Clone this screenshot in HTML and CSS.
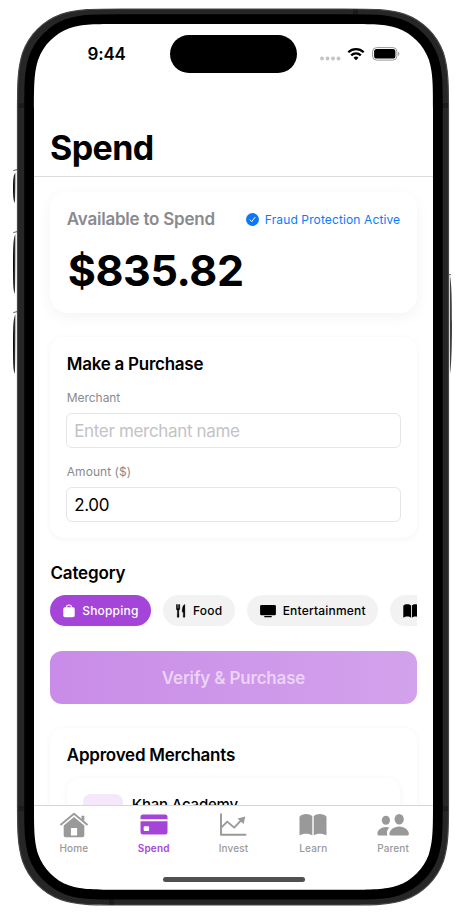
FILE: index.html
```html
<!DOCTYPE html>
<html lang="en">
<head>
<meta charset="utf-8">
<title>Spend</title>
<link rel="stylesheet" href="styles.css">
</head>
<body>
<svg class="device" viewBox="0 0 457 924" aria-hidden="true">
  <defs>
    <linearGradient id="key" x1="0" x2="1"><stop offset="0" stop-color="#000"/><stop offset=".5" stop-color="#222"/><stop offset=".7" stop-color="#888"/><stop offset="1" stop-color="#ccc"/></linearGradient>
    <linearGradient id="power" x1="0" x2="1"><stop offset="0" stop-color="#ccc"/><stop offset=".4" stop-color="#444"/><stop offset="1" stop-color="#000"/></linearGradient>
    <path id="shell" d="M17.5 114.5c0-30.4 0-45.6 5.2-61.9c6.5-17.9 20.5-31.9 38.4-38.4c16.3-5.2 31.5-5.2 61.9-5.2H343c30.4 0 45.6 0 61.9 5.2c17.9 6.5 31.9 20.5 38.4 38.4c5.2 16.3 5.2 31.5 5.2 61.9V799.5c0 30.4 0 45.6-5.2 61.9c-6.5 17.9-20.5 31.9-38.4 38.4c-16.3 5.2-31.5 5.2-61.9 5.2H123c-30.4 0-45.6 0-61.9-5.2c-17.9-6.5-31.9-20.5-38.4-38.4c-5.2-16.3-5.2-31.5-5.2-61.9z"/>
    <path id="glass" d="M34 109.6c0-24.6 0-37 4.2-50.2c5.3-14.5 16.7-25.9 31.2-31.2c13.2-4.2 25.6-4.2 50.2-4.2H347.4c24.6 0 37 0 50.2 4.2c14.5 5.3 25.9 16.7 31.2 31.2c4.2 13.2 4.2 25.6 4.2 50.2V804.2c0 24.6 0 37-4.2 50.2c-5.3 14.5-16.7 25.9-31.2 31.2c-13.2 4.2-25.6 4.2-50.2 4.2H119.6c-24.6 0-37 0-50.2-4.2c-14.5-5.3-25.9-16.7-31.2-31.2c-4.2-13.2-4.2-25.6-4.2-50.2z"/>
  </defs>
  <path d="M13.3 170.500l3.700-.8M13.3 232.500l3.700-.8M13.3 312.500l3.700-.8M449 274.700h2" stroke="#333" stroke-width=".8"/>
  <g fill="url(#key)">
    <path d="M15.800 172.500c-2.400 1-2.800 8-2.800 15s.3 13 1.600 15.500c1-4 1.500-25 1.200-30.500z"/>
    <path d="M15.800 234c-2.400 2-2.800 12-2.800 30s.3 27 1.600 30c1-6 1.500-50 1.200-60z"/>
    <path d="M15.800 314c-2.400 2-2.800 12-2.800 30s.3 27 1.600 30c1-6 1.500-50 1.200-60z"/>
  </g>
  <path d="M449.500 275c1.900 3 2.300 20 2.300 49s-.6 43-1.600 49c-.8-10-.7-84-.7-98z" fill="url(#power)"/>
  <use href="#shell" fill="#262626" stroke="#464646" stroke-width="1.200"/>
  <path d="M18.500 105.500h6M442 105.500h6M18.500 808.500h6M442 808.500h6M111.500 899v5.500M355.500 9.500v6" stroke="#1c1c1c" stroke-width="5"/>
  <use href="#glass" fill="#000" stroke="#000" stroke-width="19.500"/>
  <use href="#glass" fill="#fff"/>
</svg>

<main class="screen">
  <header class="status">
    <span class="time">9:44</span>
    <span class="island"></span>
    <span class="signals">
      <svg width="21" height="5" viewBox="0 0 21 5" fill="#c4c4c4"><circle cx="2" cy="2.500" r="1.900"/><circle cx="7.500" cy="2.500" r="1.900"/><circle cx="13" cy="2.500" r="1.900"/><circle cx="18.500" cy="2.500" r="1.900"/></svg>
      <svg class="wifi" width="18" height="14" viewBox="0 0 18 14" fill="none" stroke="#000" stroke-width="2.300"><path d="M1.300 5.200a11 11 0 0 1 15.400 0M4.200 8.400a6.900 6.900 0 0 1 9.600 0"/><path d="M9 13.200 6.500 10.700a3.600 3.600 0 0 1 5 0z" fill="#000" stroke="none"/></svg>
      <svg class="battery" width="28" height="14" viewBox="0 0 28 14"><rect x=".6" y=".6" width="24.300" height="12.500" rx="4" fill="none" stroke="#999"/><rect x="2.100" y="2.100" width="21.300" height="9.500" rx="2.600"/><path d="M26 4.800c2 .9 2 3.200 0 4.100z" fill="#aaa"/></svg>
    </span>
  </header>
  <h1 class="title"><span>Spend</span></h1>

  <div class="content">
    <section class="card balance">
      <div class="row">
        <h2 class="muted">Available to Spend</h2>
        <span class="fraud"><svg width="13" height="13" viewBox="0 0 12 12"><circle cx="6" cy="6" r="6" fill="#0a78fb"/><path d="M3.700 6.300 5.300 8 8.300 4" fill="none" stroke="#fff" stroke-width=".9" stroke-linecap="round" stroke-linejoin="round"/></svg><span>Fraud Protection Active</span></span>
      </div>
      <div class="amount">$835.82</div>
    </section>

    <section class="card form">
      <h2 class="make">Make a Purchase</h2>
      <div class="label merchant">Merchant</div>
      <div class="field hint"><span>Enter merchant name</span></div>
      <div class="label">Amount ($)</div>
      <div class="field"><span>2.00</span></div>
    </section>

    <h2 class="category">Category</h2>
    <div class="chips">
      <span class="chip on"><svg width="12" height="14" viewBox="0 0 12 14"><path d="M3.500 4.500V3.200a2.500 2.200 0 0 1 5 0v1.300" fill="none" stroke="currentColor" stroke-width="1.200"/><rect x=".3" y="3.200" width="11.400" height="10" rx="1.700" fill="currentColor"/></svg><span>Shopping</span></span>
      <span class="chip"><svg width="10" height="14" viewBox="0 0 10 14" fill="currentColor"><path d="M.3.500h.8v3.800h.5V.500h.9v3.800H3V.500h.8v4.300c0 .9-.5 1.400-1 1.700l.2 6.300c0 1-1.800 1-1.800 0l.2-6.300c-.6-.3-1.100-.8-1.100-1.700zM8.900.500v12.300c0 1-1.700 1-1.700 0l.1-4.200-1.100-.5C6.100 4 7 .8 8.900.500z" stroke="currentColor" stroke-width=".3"/></svg><span>Food</span></span>
      <span class="chip"><svg width="16" height="14" viewBox="0 0 16 14" fill="currentColor"><rect x=".1" y="1" width="15.800" height="10.300" rx="1.300"/><rect x="4.200" y="12.100" width="7.600" height="1.100" rx=".5"/></svg><span>Entertainment</span></span>
      <span class="chip more"><svg width="17" height="14" viewBox="0 0 28 23" fill="currentColor"><path d="M.5 3C3-.2 10.500-.2 13.300 2.500v20C10.500 20 4 20 .5 22.500zM14.700 2.500C17.500-.2 25-.2 27.500 3v19.500C24 20 17.500 20 14.700 22.500z"/></svg></span>
    </div>

    <div class="verify"><span>Verify &amp; Purchase</span></div>

    <section class="card approved">
      <h2 class="approved-title">Approved Merchants</h2>
      <div class="merchant-row">
        <span class="avatar"></span>
        <span class="name">Khan Academy</span>
        <span class="check"></span>
      </div>
    </section>
  </div>

  <nav class="tabs">
    <div class="tab"><svg width="28" height="26" viewBox="0 0 28 26"><path d="M1 12.500 14 1.700 27 12.500" fill="none" stroke="currentColor" stroke-width="1.800" stroke-linecap="round" stroke-linejoin="round"/><path d="M21.500 3.700h2.800v5.500l-2.800-2.300zM14 4.900l10.300 8.600v9.900a1.800 1.800 0 0 1-1.800 1.800h-17a1.800 1.800 0 0 1-1.800-1.800v-9.900z" fill="currentColor"/><path d="M10.900 16h6.200v7.500h-6.200z" fill="#fff"/></svg><span>Home</span></div>
    <div class="tab active"><svg width="28" height="26" viewBox="0 0 28 26"><path d="M3 2.500h22a2.500 2.500 0 0 1 2.500 2.500v2.300H.5V5A2.500 2.500 0 0 1 3 2.500zM.5 9.300h27V20a2.500 2.500 0 0 1-2.500 2.500H3A2.500 2.500 0 0 1 .5 20z" fill="currentColor"/><rect x="3.700" y="14.300" width="5.400" height="4.700" rx="1" fill="#fff"/></svg><span>Spend</span></div>
    <div class="tab"><svg width="28" height="26" viewBox="0 0 28 26"><path d="M2 2.300v20.500h24.500M2.500 15.300 8.200 9.600l7 6 8-8.500" fill="none" stroke="currentColor" stroke-width="1.900" stroke-linecap="round" stroke-linejoin="round"/><path d="M26.300 4.500 24.600 12l-6.100-5.500z" fill="currentColor"/></svg><span>Invest</span></div>
    <div class="tab"><svg width="28" height="26" viewBox="0 0 28 26" fill="currentColor"><path d="M.5 4.800C3 1.300 10.500 1.300 13.300 4.300v19.200C10.500 21 4 21 .5 23.500zM14.700 4.300C17.500 1.300 25 1.300 27.500 4.800v18.700C24 21 17.500 21 14.700 23.500z"/></svg><span>Learn</span></div>
    <div class="tab"><svg width="32" height="26" viewBox="0 0 32 26" fill="currentColor"><ellipse cx="8.900" cy="8.300" rx="4.100" ry="4.500"/><ellipse cx="22.200" cy="7.200" rx="4.600" ry="5.200"/><path d="M12.400 15.600c-5.300-2-11.900 1.100-12 6.100 0 1.300.7 1.800 1.800 1.800h8.200c-1.200-2.900-.1-5.900 2-7.900zM14.200 23.500c-1.200 0-1.800-.6-1.800-1.500 0-3.600 4.300-7.400 9.800-7.400s9.700 3.800 9.700 7.400c0 .9-.6 1.500-1.800 1.500z"/></svg><span>Parent</span></div>
  </nav>
  <div class="home-bar"></div>
</main>
</body>
</html>
```

FILE: styles.css
```css
* { box-sizing: border-box; margin: 0; padding: 0; }
body {
  width: 457px;
  height: 924px;
  overflow: hidden;
  background: #fff;
  color: #000;
  font-family: Inter, "Liberation Sans", sans-serif;
}
svg { display: block; flex: none; }
span { white-space: nowrap; }
.device { position: absolute; left: 0; top: 0; width: 457px; height: 924px; z-index: -1; }

.screen {
  width: 399px;
  height: 866px;
  margin: 24px 0 0 34px;
  display: flex;
  flex-direction: column;
}

.status { display: grid; grid-template-columns: 136px 127px 1fr; height: 60px; padding-top: 11px; }
.time { padding-left: 53.5px; font-size: 17px; font-weight: 600; line-height: 38px; letter-spacing: -0.2px; }
.island { height: 38px; border-radius: 19px; background: #000; }
.signals { display: flex; align-items: center; height: 37px; padding-left: 23px; }
.signals > :first-child { margin-top: 9px; }
.wifi { margin-left: 5.500px; }
.battery { margin-left: 7.500px; }

.title { height: 93px; padding: 43px 0 0 16px; border-bottom: 1px solid #dcdcdd; font-size: 34px; font-weight: 700; line-height: 41px; letter-spacing: -0.6px; }

.content { height: 628px; padding: 15px 16.4px 0; overflow: hidden; }
.card { border-radius: 14px; padding: 16px 16.4px; background: #fff; }
.balance { height: 121px; border-radius: 17px; box-shadow: 0 4px 16px rgba(0, 0, 0, .05); }
.row { display: flex; justify-content: space-between; align-items: center; height: 22px; }
h2 { font-size: 17px; font-weight: 600; line-height: 22px; white-space: nowrap; letter-spacing: -0.26px; }
.muted { color: #8a8a8e; letter-spacing: -0.22px; }
.fraud { display: flex; align-items: center; gap: 6px; color: #0a7aff; font-size: 12px; letter-spacing: 0.12px; }
.amount { margin: 14px 0 0 1px; font-size: 43px; line-height: 52px; font-weight: 700; letter-spacing: -0.4px; }

.form { height: 201px; margin-top: 24px; box-shadow: 0 1px 6px rgba(0, 0, 0, .05); }
.label { margin-top: 16px; font-size: 12px; line-height: 16px; color: #8a8a8e; letter-spacing: 0.05px; }
.merchant { margin-top: 15px; letter-spacing: -0.05px; }
.field { display: flex; align-items: center; height: 35px; margin: 7px -0.6px 0; padding-left: 7px; border: 1px solid #e6e6e8; border-radius: 6px; font-size: 17px; letter-spacing: -0.33px; }
.hint { color: #c3c3c5; }

.category { margin-top: 24px; letter-spacing: -0.15px; }
.chips { display: flex; gap: 12.2px; margin-top: 11px; overflow: hidden; }
.chip { display: flex; flex: none; align-items: center; gap: 7px; height: 31px; padding: 0 12.4px 0 12.8px; border-radius: 16px; background: #f2f2f2; font-size: 12px; font-weight: 500; letter-spacing: 0.2px; }
.on { background: #a544d8; color: #fff; }
.more { width: 108px; }

.verify { display: flex; align-items: center; justify-content: center; height: 53px; margin-top: 25px; border-radius: 12px; background: linear-gradient(90deg, #c98ce8, #d3a2ec); color: #ebd3f7; font-size: 17px; font-weight: 600; letter-spacing: -0.18px; }

.approved { height: 200px; margin-top: 24px; box-shadow: 0 1px 6px rgba(0, 0, 0, .05); }
.approved-title { letter-spacing: -0.23px; }
.merchant-row { display: flex; align-items: flex-start; gap: 9px; height: 90px; margin-top: 12px; padding: 16px; border-radius: 12px; box-shadow: 0 1px 6px rgba(0, 0, 0, .05); }
.avatar { width: 40px; height: 40px; border-radius: 8px; background: #f5e8fb; }
.name { padding-top: 1px; font-size: 15px; font-weight: 500; line-height: 20px; letter-spacing: -0.2px; }
.check { width: 14px; height: 14px; margin: 10.500px 4px 0 auto; border-radius: 50%; background: #34c78a; }

.tabs { display: grid; grid-template-columns: repeat(5, 1fr); height: 72px; padding-top: 6px; border-top: 1px solid #d6d6d8; color: #999; font-size: 10px; font-weight: 500; letter-spacing: 0.15px; }
.tab { display: flex; flex-direction: column; align-items: center; gap: 3.500px; line-height: 12px; }
.active { color: #a544d8; font-weight: 600; }
.home-bar { width: 142px; height: 5px; margin: 0 auto; border-radius: 3px; background: #505050; }
```
